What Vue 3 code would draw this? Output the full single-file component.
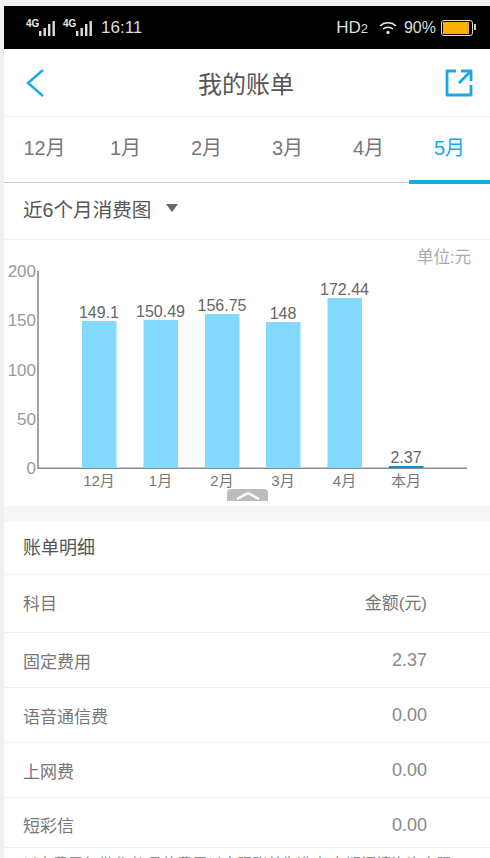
<script setup>
const tabs = ['12月', '1月', '2月', '3月', '4月', '5月']

const bars = [
  { label: '12月', value: '149.1', x: 82, top: 321 },
  { label: '1月', value: '150.49', x: 143.5, top: 320 },
  { label: '2月', value: '156.75', x: 205, top: 314 },
  { label: '3月', value: '148', x: 266, top: 322 },
  { label: '4月', value: '172.44', x: 327.5, top: 298 },
  { label: '本月', value: '2.37', x: 389, top: 466, current: true }
]
const ticks = [
  { label: '200', y: 271 },
  { label: '150', y: 320 },
  { label: '100', y: 370 },
  { label: '50', y: 419 },
  { label: '0', y: 468 }
]
const rows = [
  { name: '固定费用', amount: '2.37' },
  { name: '语音通信费', amount: '0.00' },
  { name: '上网费', amount: '0.00' },
  { name: '短彩信', amount: '0.00', last: true }
]
</script>

<template>
  <div class="page">
    <div class="status">
      <div class="status-left">
        <span v-for="n in 2" :key="n" class="signal">
          <span class="net">4G</span>
          <svg width="17" height="15" viewBox="0 0 17 15">
            <rect x="1" y="10" width="2.4" height="5" fill="#ddd" />
            <rect x="5.5" y="7" width="2.4" height="8" fill="#ddd" />
            <rect x="10" y="3" width="2.4" height="12" fill="#ddd" />
            <rect x="14.5" y="0" width="2.4" height="15" fill="#ddd" />
          </svg>
        </span>
        <span class="time">16:11</span>
      </div>
      <div class="status-right">
        <span class="hd">HD<small>2</small></span>
        <svg class="wifi" width="18" height="14" viewBox="0 0 18 14" fill="none" stroke="#e8e8e8" stroke-width="1.5">
          <path d="M1 5 C5.5 0.8 12.5 0.8 17 5" />
          <path d="M4 8 C6.8 5.6 11.2 5.6 14 8" />
          <circle cx="9" cy="11.4" r="1.6" fill="#e8e8e8" stroke="none" />
        </svg>
        <span class="pct">90%</span>
        <span class="battery"><i></i></span>
      </div>
    </div>

    <header class="topbar">
      <svg width="22" height="32" viewBox="0 0 22 32" fill="none" stroke="#1aa9e8" stroke-width="2.4">
        <path d="M18 3 L3 16 L18 29" />
      </svg>
      <h1>我的账单</h1>
      <svg width="28" height="28" viewBox="0 0 28 28" fill="none" stroke="#1aa9e8" stroke-width="2.8" stroke-linejoin="round">
        <path d="M11 2 H2 V26 H26 V16" />
        <path d="M14 14 L25 3" />
        <path d="M16 2 H26 V12" />
      </svg>
    </header>

    <nav class="tabs">
      <div v-for="(t, i) in tabs" :key="t" class="tab" :class="{ active: i === 5 }">{{ t }}</div>
    </nav>

    <div class="chart-title">
      <span>近6个月消费图</span>
      <i class="caret"></i>
    </div>

    <section class="chart">
      <div class="unit">单位:元</div>
      <!-- viewBox keeps page coordinates so the values read straight off the screenshot -->
      <svg class="plot" width="486" height="266" viewBox="4 240 486 266">
        <line x1="38" y1="271" x2="38" y2="469" stroke="#8c8c8c" stroke-width="1.6" />
        <line x1="38" y1="468.3" x2="467" y2="468.3" stroke="#8c8c8c" stroke-width="1.4" />
        <text v-for="t in ticks" :key="t.label" x="36" :y="t.y + 6" class="tick">{{ t.label }}</text>
        <g v-for="b in bars" :key="b.label">
          <rect :x="b.x" :y="b.top" width="34.5" :height="468 - b.top" :fill="b.current ? '#0a8fd6' : '#84d9ff'" />
          <text :x="b.x + 17" :y="b.top - 3" class="val">{{ b.value }}</text>
          <text :x="b.x + 17" y="486" class="month">{{ b.label }}</text>
        </g>
      </svg>
      <div class="collapse">
        <svg width="28" height="9" viewBox="0 0 28 9" fill="none" stroke="#fff" stroke-width="2.4">
          <path d="M3 8 L14 2 L25 8" />
        </svg>
      </div>
    </section>

    <div class="gap"></div>

    <section class="detail">
      <div class="detail-head">账单明细</div>
      <div class="row row-head">
        <span>科目</span>
        <span class="amount-head">金额(元)</span>
      </div>
      <div v-for="r in rows" :key="r.name" class="row" :class="{ 'row-last': r.last }">
        <span>{{ r.name }}</span>
        <span class="amount">{{ r.amount }}</span>
      </div>
      <div class="note">以上费用仅供参考,具体费用以实际账单为准,如有疑问请咨询客服</div>
    </section>
  </div>
</template>

<style>
html, body {
  background: #f2f0ef;
  overflow: hidden;
}
</style>

<style scoped>
.page {
  height: 858px;
  box-sizing: border-box;
  padding: 6px 0 0 4px;
  overflow: hidden;
  font-family: "Liberation Sans", "Noto Sans CJK SC", sans-serif;
  color: #666;
}
.status {
  height: 43px;
  background: #000;
  color: #ddd;
  display: flex;
  justify-content: space-between;
  align-items: center;
  padding: 0 17px 0 22px;
}
.status-left, .status-right {
  display: flex;
  align-items: center;
}
.signal {
  position: relative;
  width: 37px;
  height: 16px;
  display: flex;
  justify-content: flex-end;
  align-items: flex-end;
  padding-right: 8px;
  box-sizing: border-box;
  flex: none;
}
.net {
  position: absolute;
  left: 0;
  top: -1px;
  font-size: 10px;
  font-weight: 700;
  line-height: 10px;
  color: #e8e8e8;
}
.time {
  font-size: 17px;
  margin-left: 1px;
}
.hd {
  font-size: 17px;
}
.hd small {
  font-size: 13px;
}
.wifi {
  margin: 0 7px 0 11px;
}
.pct {
  font-size: 16px;
  margin-right: 5px;
}
.battery {
  position: relative;
  width: 28px;
  height: 12px;
  border: 1.5px solid #ddd;
  border-radius: 3px;
  padding: 1px;
  box-sizing: content-box;
}
.battery i {
  display: block;
  width: 26px;
  height: 100%;
  background: #fbb000;
}
.battery::after {
  content: "";
  position: absolute;
  right: -4px;
  top: 3px;
  width: 2px;
  height: 6px;
  background: #ccc;
}
.topbar {
  height: 68px;
  background: #fff;
  display: flex;
  justify-content: space-between;
  align-items: center;
  padding: 0 17px 0 21px;
  box-sizing: border-box;
  border-bottom: 1px solid #f0f0f0;
}
.topbar h1 {
  margin: 0;
  font-size: 24px;
  font-weight: 400;
  color: #555;
}
.tabs {
  height: 66px;
  background: #fff;
  display: grid;
  grid-template-columns: repeat(6, 1fr);
  border-bottom: 1px solid #ccc;
  box-sizing: border-box;
}
.tab {
  font-size: 20px;
  line-height: 63px;
  text-align: center;
  color: #777;
}
.tab.active {
  color: #1aa9e8;
  border-bottom: 4px solid #1aa9e8;
  margin-bottom: -1px;
}
.chart-title {
  height: 57px;
  background: #fff;
  border-bottom: 1px solid #f2f2f2;
  box-sizing: border-box;
  display: flex;
  align-items: center;
  padding: 0 0 6px 19px;
  font-size: 19.6px;
  color: #555;
}
.caret {
  width: 0;
  height: 0;
  margin: 0 0 0 15px;
  border-left: 6px solid transparent;
  border-right: 6px solid transparent;
  border-top: 8px solid #666;
}
.chart {
  position: relative;
  height: 266px;
  background: #fff;
}
.unit {
  position: absolute;
  right: 19px;
  top: 4px;
  font-size: 16.5px;
  color: #aaa;
}
.plot {
  display: block;
}
.tick {
  font-size: 17px;
  fill: #999;
  text-anchor: end;
}
.val {
  font-size: 16px;
  fill: #666;
  text-anchor: middle;
}
.month {
  font-size: 15px;
  fill: #777;
  text-anchor: middle;
}
.collapse {
  position: absolute;
  left: 223px;
  top: 249px;
  width: 41px;
  height: 12px;
  background: #bbb;
  border-radius: 4px 4px 0 0;
  display: flex;
  justify-content: center;
  align-items: center;
}
.gap {
  height: 16px;
  background: #f5f6f8;
}
.detail {
  background: #fff;
}
.detail-head {
  height: 53px;
  line-height: 52px;
  padding-left: 19px;
  font-size: 18px;
  color: #555;
  border-bottom: 1px solid #f0f0f0;
  box-sizing: border-box;
}
.row {
  height: 55px;
  box-sizing: border-box;
  border-bottom: 1px solid #f0f0f0;
  display: flex;
  justify-content: space-between;
  align-items: center;
  padding: 0 63px 0 19px;
  font-size: 17px;
  color: #777;
}
.row-head {
  height: 58px;
  align-items: flex-start;
  padding-top: 15px;
}
.row-last {
  height: 50px;
  padding-top: 4px;
}
.amount-head {
  margin-top: -1px;
}
.amount {
  font-size: 18px;
  color: #888;
  padding-top: 1px;
}
.note {
  padding: 6px 0 0 19px;
  font-size: 15px;
  line-height: 20px;
  color: #888;
  white-space: nowrap;
}
</style>
